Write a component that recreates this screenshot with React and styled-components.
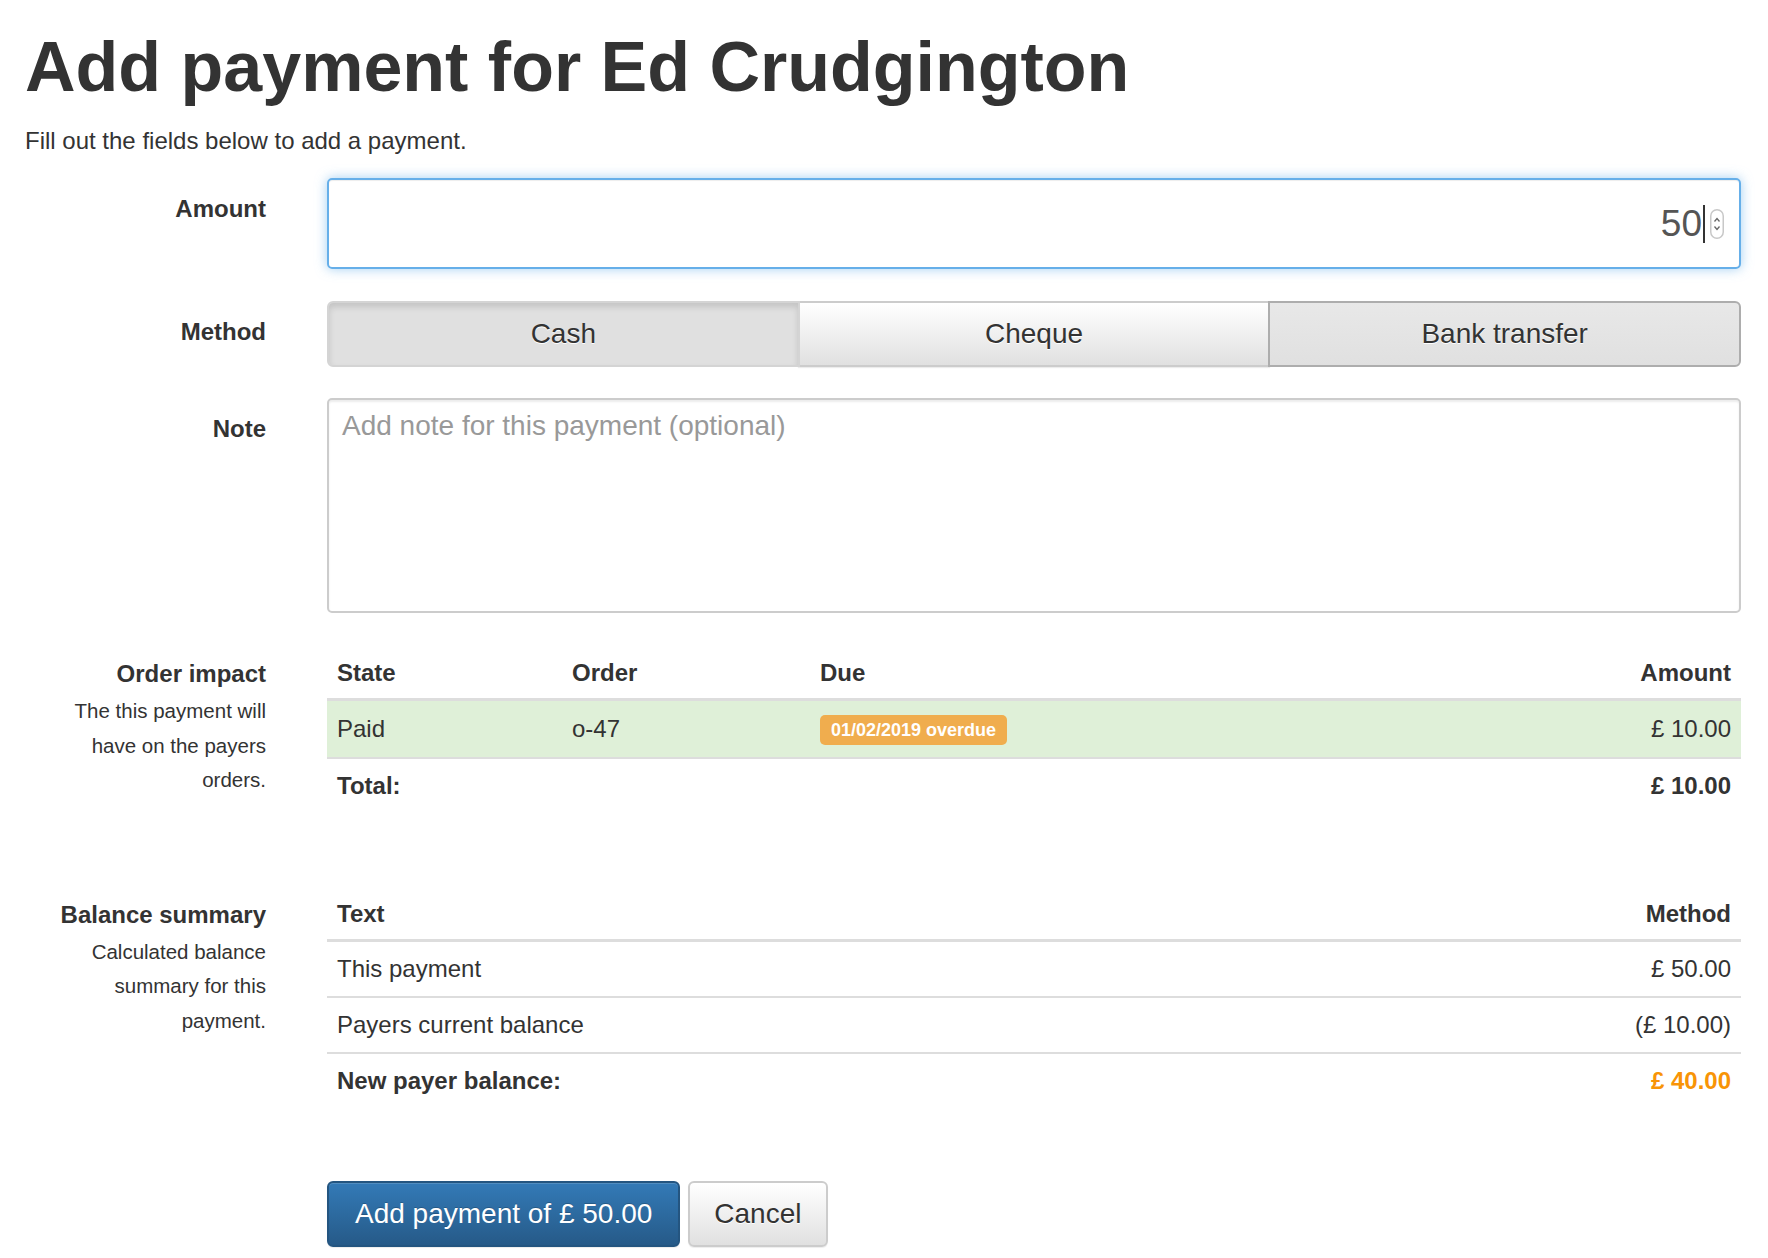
import React from "react";
import styled, { createGlobalStyle, css } from "styled-components";

const GlobalStyle = createGlobalStyle`
  body {
    margin: 0;
    background: #fff;
    color: #333;
    font-family: "Liberation Sans", Arial, Helvetica, sans-serif;
  }
  * { box-sizing: border-box; }
`;

const Page = styled.div`
  padding: 0 27px 10px 25px;
`;

const Title = styled.h1`
  margin: 29px 0 0;
  font-size: 70px;
  line-height: 77px;
  font-weight: 700;
  color: #333;
`;

const Lead = styled.p`
  margin: 18px 0 20px;
  font-size: 24px;
  line-height: 34px;
`;

const FormGroup = styled.div`
  display: grid;
  grid-template-columns: 241px 1fr;
  column-gap: 61px;
  margin-bottom: ${(p) => p.$gap ?? 32}px;
`;

const LabelCol = styled.div`
  text-align: right;
  padding-top: 16px;
`;

const Label = styled.label`
  display: block;
  font-size: 24px;
  line-height: 30px;
  font-weight: 700;
`;

const Help = styled.div`
  margin-top: 5px;
  font-size: 20.5px;
  line-height: 34.5px;
`;

const AmountField = styled.div`
  height: 91px;
  border: 2px solid #66afe9;
  border-radius: 5px;
  box-shadow: inset 0 1px 1px rgba(0, 0, 0, 0.075),
    0 0 12px rgba(102, 175, 233, 0.6);
  display: flex;
  align-items: center;
  justify-content: flex-end;
  padding-right: 15px;
`;

const AmountValue = styled.span`
  font-size: 37px;
  color: #555;
`;

const Caret = styled.span`
  width: 2px;
  height: 38px;
  background: #333;
  margin-left: 1px;
`;

const Spinner = () => (
  <svg width="14" height="30" viewBox="0 0 14 30" style={{ marginLeft: 5 }}>
    <rect x="0.75" y="0.75" width="12.5" height="28.5" rx="6.25" fill="#fff" stroke="#c8c8c8" strokeWidth="1.5" />
    <path d="M4.5 12.5 L7 9.5 L9.5 12.5" fill="none" stroke="#666" strokeWidth="1.3" />
    <path d="M4.5 17.5 L7 20.5 L9.5 17.5" fill="none" stroke="#666" strokeWidth="1.3" />
  </svg>
);

const MethodGroup = styled.div`
  display: flex;
  height: 66px;
`;

const MethodButton = styled.button`
  flex: 1;
  font-family: inherit;
  font-size: 28px;
  color: #333;
  border: 2px solid #ccc;
  margin: 0;
  padding: 0;
  text-shadow: 0 1px 0 #fff;
  & + & {
    margin-left: -2px;
  }
  &:first-child {
    border-radius: 6px 0 0 6px;
  }
  &:last-child {
    border-radius: 0 6px 6px 0;
  }
  ${(p) =>
    p.$state === "active" &&
    css`
      background: #e0e0e0;
      border-color: #d4d4d4;
      box-shadow: inset 0 4px 6px rgba(0, 0, 0, 0.13);
      position: relative;
      z-index: 0;
    `}
  ${(p) =>
    p.$state === "default" &&
    css`
      background: linear-gradient(to bottom, #fff 0%, #e0e0e0 100%);
      box-shadow: inset 0 1px 0 rgba(255, 255, 255, 0.15),
        0 1px 1px rgba(0, 0, 0, 0.075);
    `}
  ${(p) =>
    p.$state === "hover" &&
    css`
      background: linear-gradient(to bottom, #e8e8e8 0%, #e0e0e0 100%);
      border-color: #adadad;
      position: relative;
      z-index: 1;
    `}
`;

const NoteArea = styled.textarea`
  display: block;
  width: 100%;
  height: 215px;
  border: 2px solid #ccc;
  border-radius: 5px;
  padding: 8px 13px;
  font-family: inherit;
  font-size: 28px;
  line-height: 36px;
  color: #555;
  resize: none;
  box-shadow: inset 0 2px 2px rgba(0, 0, 0, 0.075);
  &::placeholder {
    color: #999;
  }
`;

const Table = styled.table`
  width: 100%;
  border-collapse: collapse;
  font-size: 24px;
  margin-bottom: ${(p) => p.$after}px;
`;

const Th = styled.th`
  text-align: ${(p) => p.$align || "left"};
  width: ${(p) => p.$w || "auto"};
  white-space: nowrap;
  font-weight: 700;
  padding: 15px 10px 10px;
  line-height: 30px;
  border-bottom: 3px solid #ddd;
  vertical-align: bottom;
`;

const Tr = styled.tr`
  background: ${(p) => (p.$tone === "success" ? "#dff0d8" : "transparent")};
  font-weight: ${(p) => (p.$strong ? 700 : 400)};
`;

const Td = styled.td`
  text-align: ${(p) => p.$align || "left"};
  color: ${(p) => p.$color || "inherit"};
  padding: 11.5px 10px;
  line-height: 31px;
  border-top: 2px solid #ddd;
  white-space: nowrap;
`;

const Badge = styled.span`
  display: inline-block;
  background: #f0ad4e;
  color: #fff;
  font-weight: 700;
  font-size: 18px;
  line-height: 21px;
  padding: 5px 11px 4px;
  border-radius: 5px;
  vertical-align: middle;
`;

const Actions = styled.div`
  display: flex;
  gap: 8px;
`;

const Button = styled.button`
  height: 66px;
  padding: 0 ${(p) => (p.$primary ? 26 : 24)}px;
  font-family: inherit;
  font-size: 28px;
  border-radius: 6px;
  border: 2px solid;
  ${(p) =>
    p.$primary
      ? css`
          color: #fff;
          background: linear-gradient(to bottom, #337ab7 0%, #265a88 100%);
          border-color: #245580;
          text-shadow: 0 -1px 0 rgba(0, 0, 0, 0.2);
        `
      : css`
          color: #333;
          background: linear-gradient(to bottom, #fff 0%, #e0e0e0 100%);
          border-color: #ccc;
          text-shadow: 0 1px 0 #fff;
        `}
  box-shadow: inset 0 1px 0 rgba(255, 255, 255, 0.15),
    0 1px 1px rgba(0, 0, 0, 0.075);
`;

const methods = [
  { name: "Cash", state: "active" },
  { name: "Cheque", state: "default" },
  { name: "Bank transfer", state: "hover" },
];

export default function App() {
  return (
    <Page>
      <GlobalStyle />
      <Title>Add payment for Ed Crudgington</Title>
      <Lead>Fill out the fields below to add a payment.</Lead>

      <FormGroup $gap={32}>
        <LabelCol>
          <Label>Amount</Label>
        </LabelCol>
        <AmountField>
          <AmountValue>50</AmountValue>
          <Caret />
          <Spinner />
        </AmountField>
      </FormGroup>

      <FormGroup $gap={31}>
        <LabelCol>
          <Label>Method</Label>
        </LabelCol>
        <MethodGroup>
          {methods.map((m) => (
            <MethodButton key={m.name} $state={m.state}>
              {m.name}
            </MethodButton>
          ))}
        </MethodGroup>
      </FormGroup>

      <FormGroup $gap={30}>
        <LabelCol>
          <Label>Note</Label>
        </LabelCol>
        <NoteArea placeholder="Add note for this payment (optional)" />
      </FormGroup>

      <FormGroup $gap={0}>
        <LabelCol>
          <Label>Order impact</Label>
          <Help>
            The this payment will
            <br />
            have on the payers
            <br />
            orders.
          </Help>
        </LabelCol>
        <Table $after={71}>
          <thead>
            <tr>
              <Th $w="235px">State</Th>
              <Th $w="248px">Order</Th>
              <Th>Due</Th>
              <Th $align="right">Amount</Th>
            </tr>
          </thead>
          <tbody>
            <Tr $tone="success">
              <Td>Paid</Td>
              <Td>o-47</Td>
              <Td>
                <Badge>01/02/2019 overdue</Badge>
              </Td>
              <Td $align="right">£ 10.00</Td>
            </Tr>
            <Tr $strong>
              <Td>Total:</Td>
              <Td />
              <Td />
              <Td $align="right">£ 10.00</Td>
            </Tr>
          </tbody>
        </Table>
      </FormGroup>

      <FormGroup $gap={0}>
        <LabelCol>
          <Label>Balance summary</Label>
          <Help>
            Calculated balance
            <br />
            summary for this
            <br />
            payment.
          </Help>
        </LabelCol>
        <Table $after={73}>
          <thead>
            <tr>
              <Th>Text</Th>
              <Th $align="right">Method</Th>
            </tr>
          </thead>
          <tbody>
            <Tr>
              <Td>This payment</Td>
              <Td $align="right">£ 50.00</Td>
            </Tr>
            <Tr>
              <Td>Payers current balance</Td>
              <Td $align="right">(£ 10.00)</Td>
            </Tr>
            <Tr $strong>
              <Td>New payer balance:</Td>
              <Td $align="right" $color="#f89406">
                £ 40.00
              </Td>
            </Tr>
          </tbody>
        </Table>
      </FormGroup>

      <FormGroup $gap={0}>
        <div />
        <Actions>
          <Button $primary>Add payment of £ 50.00</Button>
          <Button>Cancel</Button>
        </Actions>
      </FormGroup>
    </Page>
  );
}
